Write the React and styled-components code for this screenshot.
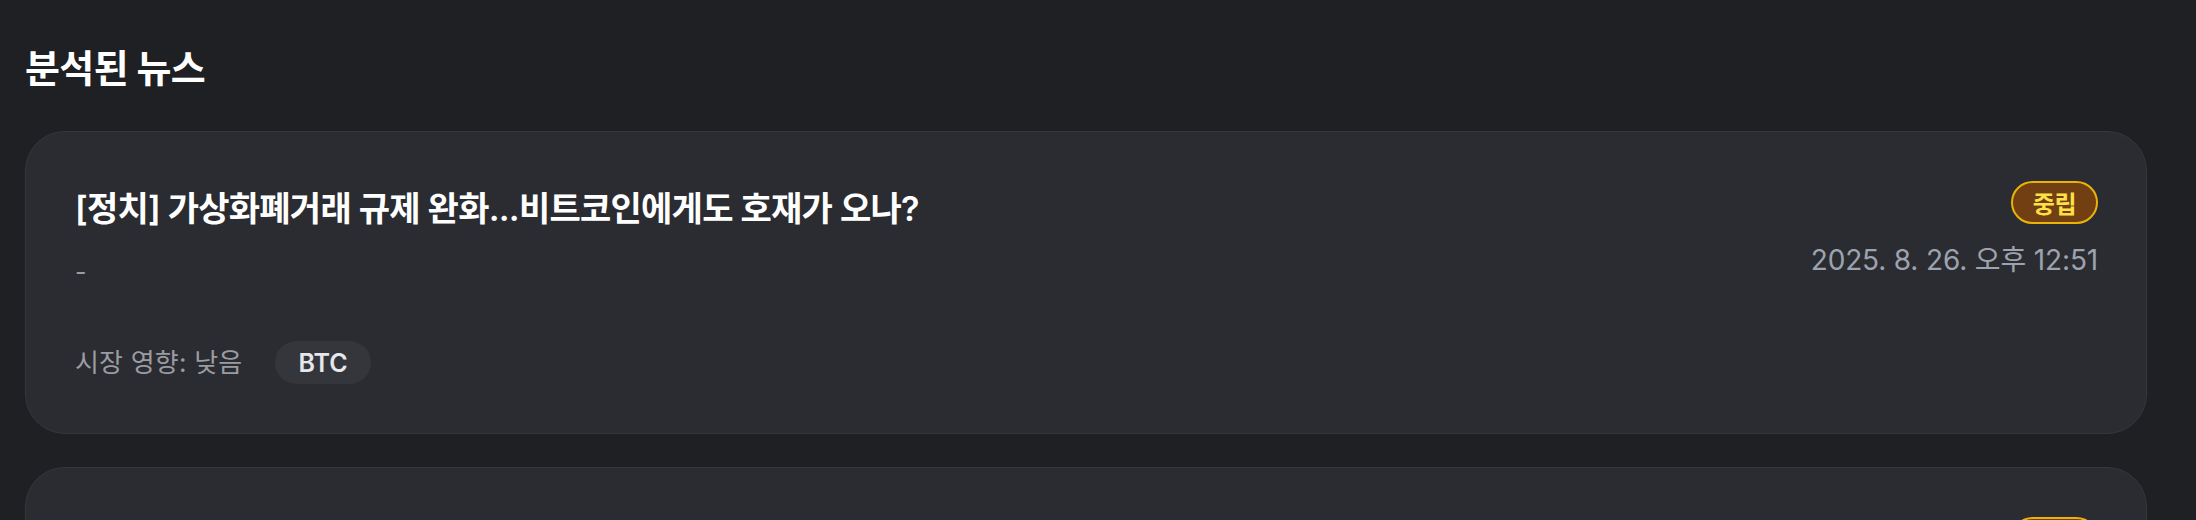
import React from 'react';
import styled, { createGlobalStyle } from 'styled-components';

const GlobalStyle = createGlobalStyle`
  html, body {
    margin: 0;
    padding: 0;
    background: #1f2024;
  }
  body {
    font-family: Inter, "Noto Sans CJK KR", "Noto Sans", sans-serif;
    color: #f3f4f6;
  }
`;

const Page = styled.div`
  min-height: 520px;
  padding: 42px 49px 40px 25px;
  box-sizing: border-box;
`;

const Heading = styled.h2`
  margin: 0 0 37px;
  font-size: 38px;
  line-height: 52px;
  font-weight: 700;
  letter-spacing: -0.6px;
  color: #ffffff;
`;

const List = styled.div`
  display: flex;
  flex-direction: column;
  gap: 33px;
`;

const Card = styled.article`
  background: #2b2c31;
  border: 1px solid #36373c;
  border-radius: 40px;
  padding: 49px 48px 49px 49px;
  display: flex;
  flex-direction: column;
  gap: 50px;
`;

const TopRow = styled.div`
  display: flex;
  justify-content: space-between;
  align-items: flex-start;
  gap: 40px;
`;

const Main = styled.div`
  display: flex;
  flex-direction: column;
  min-width: 0;
`;

const Title = styled.h3`
  margin: 0;
  font-size: 34px;
  line-height: 55px;
  font-weight: 600;
  letter-spacing: -0.75px;
  color: #ffffff;
`;

const Summary = styled.p`
  margin: 17px 0 0;
  font-size: 25px;
  line-height: 38px;
  color: #9a9ca3;
`;

const Side = styled.div`
  display: flex;
  flex-direction: column;
  align-items: flex-end;
  gap: 18px;
  flex-shrink: 0;
`;

const tones = {
  neutral: { bg: '#713f12', border: '#eab308', color: '#fde047' },
  positive: { bg: '#14532d', border: '#22c55e', color: '#86efac' },
  negative: { bg: '#7f1d1d', border: '#ef4444', color: '#fca5a5' },
};

const Badge = styled.span`
  display: inline-flex;
  align-items: center;
  justify-content: center;
  height: 43px;
  padding: 0 20px;
  box-sizing: border-box;
  border-radius: 999px;
  border: 2px solid ${(p) => tones[p.$tone].border};
  background: ${(p) => tones[p.$tone].bg};
  color: ${(p) => tones[p.$tone].color};
  font-size: 24px;
  font-weight: 700;
  letter-spacing: -0.5px;
`;

const Time = styled.span`
  font-size: 28px;
  line-height: 36px;
  letter-spacing: -0.15px;
  color: #9ca3af;
  white-space: nowrap;
`;

const Meta = styled.div`
  display: flex;
  align-items: center;
  gap: 33px;
`;

const Impact = styled.span`
  font-size: 26px;
  line-height: 36px;
  letter-spacing: 0.2px;
  color: #9a9ca3;
`;

const Coin = styled.span`
  display: inline-flex;
  align-items: center;
  height: 43px;
  padding: 0 23px;
  border-radius: 999px;
  background: #35363b;
  color: #e5e7eb;
  font-size: 25px;
  font-weight: 600;
`;

const news = [
  {
    id: 1,
    title: '[정치] 가상화폐거래 규제 완화...비트코인에게도 호재가 오나?',
    summary: '-',
    sentiment: '중립',
    tone: 'neutral',
    time: '2025. 8. 26. 오후 12:51',
    impact: '낮음',
    coins: ['BTC'],
  },
  {
    id: 2,
    title: '[경제] 미 연준 금리 동결 전망...가상자산 시장 관망세 지속',
    summary: '-',
    sentiment: '중립',
    tone: 'neutral',
    time: '2025. 8. 26. 오전 11:20',
    impact: '보통',
    coins: ['ETH'],
  },
];

export default function App() {
  return (
    <>
      <GlobalStyle />
      <Page>
        <Heading>분석된 뉴스</Heading>
        <List>
          {news.map((item) => (
            <Card key={item.id}>
              <TopRow>
                <Main>
                  <Title>{item.title}</Title>
                  <Summary>{item.summary}</Summary>
                </Main>
                <Side>
                  <Badge $tone={item.tone}>{item.sentiment}</Badge>
                  <Time>{item.time}</Time>
                </Side>
              </TopRow>
              <Meta>
                <Impact>시장 영향: {item.impact}</Impact>
                {item.coins.map((c) => (
                  <Coin key={c}>{c}</Coin>
                ))}
              </Meta>
            </Card>
          ))}
        </List>
      </Page>
    </>
  );
}
